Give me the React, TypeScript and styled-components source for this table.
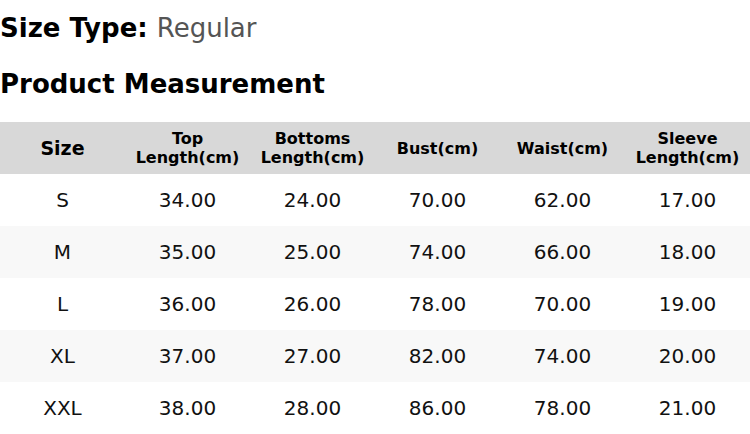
import React from "react";
import styled, { createGlobalStyle } from "styled-components";

const Global = createGlobalStyle`
  html, body { margin: 0; padding: 0; background: #fff; }
  body { font-family: "DejaVu Sans", Verdana, sans-serif; color: #000; }
`;

const Page = styled.div`
  width: 750px;
  padding-top: 13px;
  display: flex;
  flex-direction: column;
`;

const Title = styled.h2`
  margin: 0;
  font-size: 26px;
  line-height: 30px;
  font-weight: bold;
  color: #000;
`;

const TypeValue = styled.span`
  font-weight: normal;
  color: #555;
`;

const SubTitle = styled(Title)`
  margin-top: 26px;
  margin-bottom: 23px;
`;

const Table = styled.table`
  width: 750px;
  border-collapse: collapse;
  table-layout: fixed;
`;

const HeadCell = styled.th<{ $big?: boolean }>`
  height: 52px;
  padding: 0;
  background: #d8d8d8;
  font-size: ${(p) => (p.$big ? "19px" : "16px")};
  line-height: 19px;
  font-weight: bold;
  text-align: center;
  vertical-align: middle;
  color: #000;
`;

const Row = styled.tr<{ $alt: boolean }>`
  background: ${(p) => (p.$alt ? "#f8f8f8" : "#fff")};
`;

const Cell = styled.td`
  height: 52px;
  padding: 0;
  font-size: 20px;
  text-align: center;
  vertical-align: middle;
  color: #111;
`;

const heads = [
  ["Size"],
  ["Top", "Length(cm)"],
  ["Bottoms", "Length(cm)"],
  ["Bust(cm)"],
  ["Waist(cm)"],
  ["Sleeve", "Length(cm)"],
];

const rows = [
  ["S", "34.00", "24.00", "70.00", "62.00", "17.00"],
  ["M", "35.00", "25.00", "74.00", "66.00", "18.00"],
  ["L", "36.00", "26.00", "78.00", "70.00", "19.00"],
  ["XL", "37.00", "27.00", "82.00", "74.00", "20.00"],
  ["XXL", "38.00", "28.00", "86.00", "78.00", "21.00"],
];

export default function App() {
  return (
    <>
      <Global />
      <Page>
        <Title>
          Size Type: <TypeValue>Regular</TypeValue>
        </Title>
        <SubTitle>Product Measurement</SubTitle>
        <Table>
          <thead>
            <tr>
              {heads.map((h, i) => (
                <HeadCell key={i} $big={i === 0}>
                  {h.map((l, j) => (
                    <React.Fragment key={j}>
                      {j > 0 && <br />}
                      {l}
                    </React.Fragment>
                  ))}
                </HeadCell>
              ))}
            </tr>
          </thead>
          <tbody>
            {rows.map((r, i) => (
              <Row key={i} $alt={i % 2 === 1}>
                {r.map((c, j) => (
                  <Cell key={j}>{c}</Cell>
                ))}
              </Row>
            ))}
          </tbody>
        </Table>
      </Page>
    </>
  );
}
